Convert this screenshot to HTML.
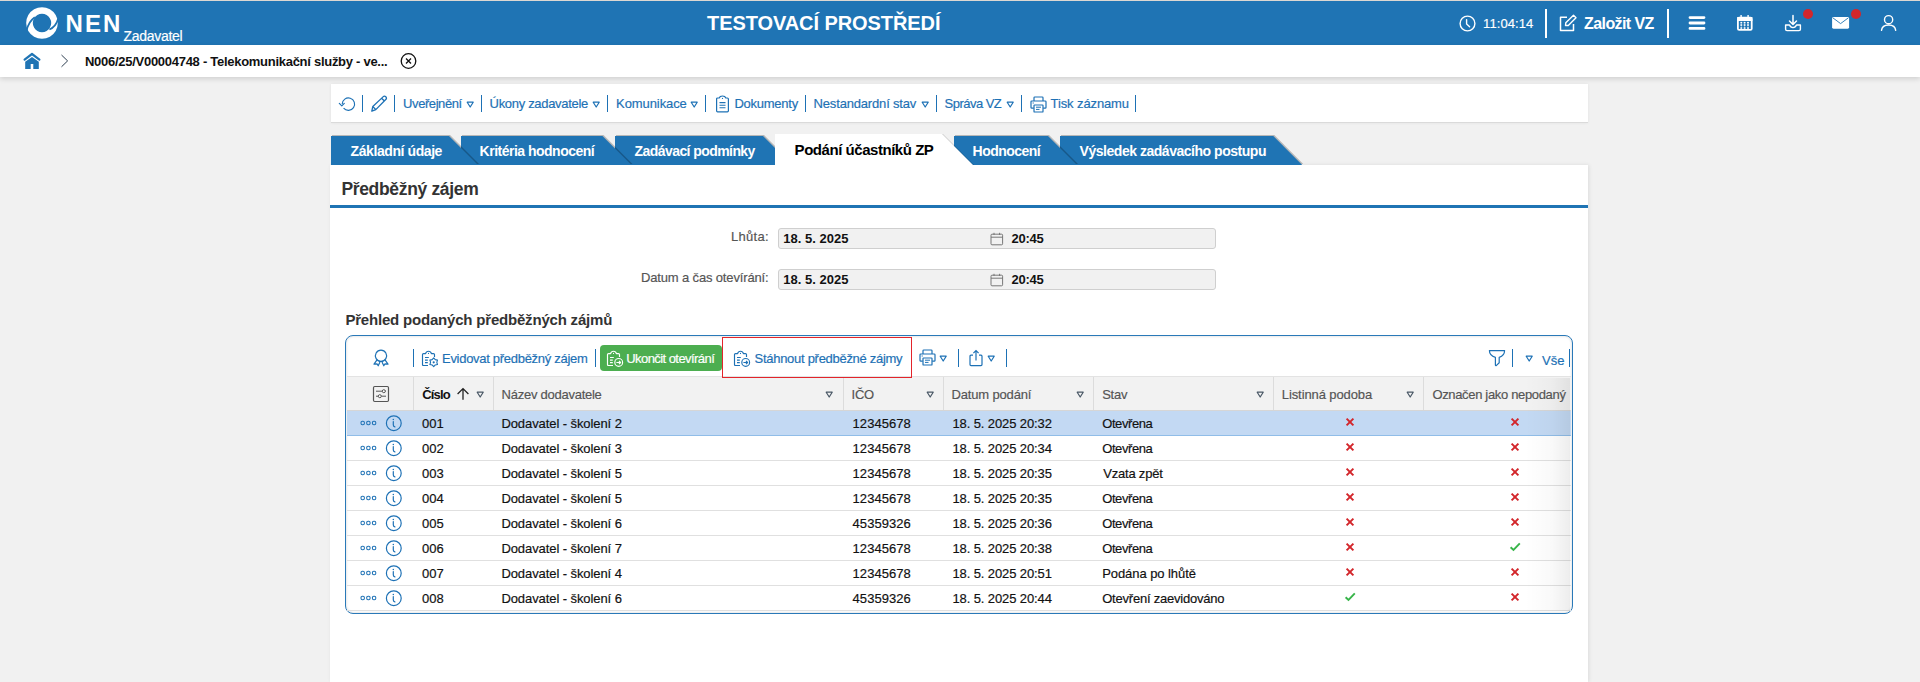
<!DOCTYPE html>
<html><head><meta charset="utf-8"><title>NEN</title>
<style>
*{box-sizing:border-box;margin:0;padding:0}
html,body{width:1920px;height:682px;overflow:hidden;background:#f1f1f1;font-family:"Liberation Sans",sans-serif;position:relative}
.a{position:absolute;display:block}
.t{position:absolute;white-space:pre;line-height:1}
</style></head><body>
<div class="a" style="left:0px;top:0px;width:1920px;height:1px;background:#dcd7d2"></div>
<div class="a" style="left:0px;top:1px;width:1920px;height:44px;background:#1f74b4"></div>
<div class="a" style="left:0px;top:45px;width:1920px;height:32px;background:#fff;box-shadow:0 2px 5px rgba(0,0,0,.14)"></div>
<svg class="a" style="left:25px;top:6px;" width="34" height="34" viewBox="0 0 34 34">
<defs><mask id="lm"><rect width="34" height="34" fill="#fff"/>
<path d="M1.6 24.5 Q3.6 15.5 9.8 11.2" fill="none" stroke="#000" stroke-width="1.7"/>
<path d="M33.2 12.6 Q31 20.6 24.4 23.6" fill="none" stroke="#000" stroke-width="1.7"/>
</mask></defs>
<g mask="url(#lm)"><path fill-rule="evenodd" fill="#fff" d="M17 1.2 A15.8 15.8 0 1 1 16.99 1.2 Z M17 7.8 A9.2 9.2 0 1 0 17.01 7.8 Z"/></g>
</svg>
<svg class="a" style="left:1459px;top:15px;" width="17" height="17" viewBox="0 0 17 17"><circle cx="8.5" cy="8.5" r="7.4" fill="none" stroke="#fff" stroke-width="1.4"/><path d="M7.6 4.6 L7.6 9 L10.6 11.8" fill="none" stroke="#fff" stroke-width="1.4" stroke-linecap="round"/></svg>
<div class="a" style="left:1545px;top:9px;width:2px;height:29px;background:#fff"></div>
<svg class="a" style="left:1559px;top:14px;" width="18" height="18" viewBox="0 0 18 18"><path d="M8 3.2 H1.5 V16.5 H14.5 V10" fill="none" stroke="#fff" stroke-width="1.5" stroke-linejoin="round"/><path d="M6.5 11.5 L6.8 8.8 L14.5 1.3 L17 3.8 L9.3 11.5 Z" fill="none" stroke="#fff" stroke-width="1.4" stroke-linejoin="round"/></svg>
<div class="a" style="left:1667px;top:9px;width:2px;height:29px;background:#fff"></div>
<svg class="a" style="left:1688px;top:15px;" width="18" height="16" viewBox="0 0 18 16"><path d="M2 2.6 H16 M2 8 H16 M2 13.4 H16" stroke="#fff" stroke-width="2.8" stroke-linecap="round"/></svg>
<svg class="a" style="left:1736px;top:14px;" width="18" height="18" viewBox="0 0 18 18"><rect x="1.9" y="3.7" width="13.8" height="12.2" rx="1.2" fill="none" stroke="#fff" stroke-width="1.8"/>
<rect x="1.2" y="3" width="15.2" height="4" fill="#fff"/>
<path d="M5.1 1 V4 M12.1 1 V4" stroke="#fff" stroke-width="1.4"/>
<g fill="#fff"><rect x="4.4" y="7.9" width="1.8" height="1.5"/><rect x="7.7" y="7.9" width="1.8" height="1.5"/><rect x="11.1" y="7.9" width="1.8" height="1.5"/>
<rect x="4.4" y="10.3" width="1.8" height="1.5"/><rect x="7.7" y="10.3" width="1.8" height="1.5"/><rect x="11.1" y="10.3" width="1.8" height="1.5"/>
<rect x="4.4" y="13.3" width="1.8" height="1.5"/><rect x="7.7" y="13.3" width="1.8" height="1.5"/><rect x="11.1" y="13.3" width="1.8" height="1.5"/>
<path d="M5.3 7.9 V14.8 M8.6 7.9 V14.8 M12 7.9 V14.8" stroke="#fff" stroke-width="0.6" opacity="0.6"/></g></svg>
<svg class="a" style="left:1784px;top:14px;" width="18" height="18" viewBox="0 0 18 18"><path d="M9 1.5 V10.5 M5.5 7 L9 10.5 L12.5 7" fill="none" stroke="#fff" stroke-width="1.5" stroke-linecap="round" stroke-linejoin="round"/><path d="M1.6 11 V15.2 Q1.6 16.6 3 16.6 H15 Q16.4 16.6 16.4 15.2 V11 H12.5 Q11.5 13.6 9 13.6 Q6.5 13.6 5.5 11 Z" fill="none" stroke="#fff" stroke-width="1.4" stroke-linejoin="round"/></svg>
<svg class="a" style="left:1802px;top:8px;" width="12" height="12" viewBox="0 0 12 12"><circle cx="6" cy="6" r="5" fill="#d3262b"/></svg>
<svg class="a" style="left:1831px;top:16px;" width="19" height="14" viewBox="0 0 19 14"><rect x="1.1" y="1.1" width="17" height="11.6" rx="1.4" fill="#fff"/><path d="M1.8 1.8 L9.6 7.6 L17.4 1.8" fill="none" stroke="#1f74b4" stroke-width="0.9"/></svg>
<svg class="a" style="left:1850px;top:8px;" width="12" height="12" viewBox="0 0 12 12"><circle cx="6" cy="6" r="5" fill="#d3262b"/></svg>
<svg class="a" style="left:1880px;top:14px;" width="17" height="18" viewBox="0 0 17 18"><circle cx="8.6" cy="5.7" r="4.1" fill="none" stroke="#fff" stroke-width="1.4"/><path d="M1.5 16.4 Q2 11 8.6 11 Q15.2 11 15.7 16.4" fill="none" stroke="#fff" stroke-width="1.4" stroke-linecap="round"/></svg>
<svg class="a" style="left:23px;top:52px;" width="18" height="18" viewBox="0 0 18 18"><path d="M1.6 7.6 L9 2 L16.4 7.6" fill="none" stroke="#1f74b4" stroke-width="2.2" stroke-linecap="round" stroke-linejoin="round"/><path d="M2.2 9.8 L9 5 L15.8 9.8 V17 H10.3 V12 H7.7 V17 H2.2 Z" fill="#1f74b4"/></svg>
<svg class="a" style="left:60px;top:54px;" width="10" height="14" viewBox="0 0 10 14"><path d="M1.5 1 L7.6 6.9 L1.5 12.8" fill="none" stroke="#2d3e50" stroke-width="1"/></svg>
<svg class="a" style="left:400px;top:53px;" width="17" height="17" viewBox="0 0 17 17"><circle cx="8.5" cy="8" r="7.3" fill="none" stroke="#111" stroke-width="1.3"/><path d="M6 5.5 L11 10.5 M11 5.5 L6 10.5" stroke="#111" stroke-width="1.3"/></svg>
<div class="a" style="left:331px;top:84px;width:1257px;height:39px;background:#fff;border-bottom:1px solid #dadada;box-shadow:0 0 3px rgba(0,0,0,.07)"></div>
<svg class="a" style="left:338px;top:95.8px;" width="19" height="18" viewBox="0 0 19 18"><path d="M4.2 8.05 A6.2 6.2 0 1 1 5.6 12.1" fill="none" stroke="#1d71b5" stroke-width="1.15"/><path d="M1.3 7.3 L3.8 9.8 L6.3 7.3" fill="none" stroke="#1d71b5" stroke-width="1.15" stroke-linejoin="round" stroke-linecap="round"/></svg>
<div class="a" style="left:362px;top:95px;width:1px;height:17px;background:#1d71b5"></div>
<svg class="a" style="left:370px;top:95px;" width="18" height="18" viewBox="0 0 18 18"><path d="M1.8 16.2 L2.8 11.5 L13.3 1.6 Q14.6 0.6 15.8 1.8 Q17 3 16 4.3 L5.8 14.6 Z M11.6 3.2 L14.4 6 M2.8 11.5 L5.8 14.6" fill="none" stroke="#1d71b5" stroke-width="1.3" stroke-linejoin="round"/></svg>
<div class="a" style="left:394px;top:95px;width:1px;height:17px;background:#1d71b5"></div>
<svg class="a" style="left:465.7px;top:100.5px;" width="9" height="8" viewBox="0 0 9 8"><path d="M1.2 1.2 H7.2 L4.2 6 Z" fill="none" stroke="#1d71b5" stroke-width="1.2" stroke-linejoin="round"/></svg>
<div class="a" style="left:481px;top:95px;width:1px;height:17px;background:#1d71b5"></div>
<svg class="a" style="left:592.0px;top:100.5px;" width="9" height="8" viewBox="0 0 9 8"><path d="M1.2 1.2 H7.2 L4.2 6 Z" fill="none" stroke="#1d71b5" stroke-width="1.2" stroke-linejoin="round"/></svg>
<div class="a" style="left:607px;top:95px;width:1px;height:17px;background:#1d71b5"></div>
<svg class="a" style="left:690.0px;top:100.5px;" width="9" height="8" viewBox="0 0 9 8"><path d="M1.2 1.2 H7.2 L4.2 6 Z" fill="none" stroke="#1d71b5" stroke-width="1.2" stroke-linejoin="round"/></svg>
<div class="a" style="left:705px;top:95px;width:1px;height:17px;background:#1d71b5"></div>
<svg class="a" style="left:715px;top:95px;" width="16" height="18" viewBox="0 0 16 18"><path d="M4.2 3 H2.6 Q1.6 3 1.6 4 V15.8 Q1.6 16.8 2.6 16.8 H12.4 Q13.4 16.8 13.4 15.8 V4 Q13.4 3 12.4 3 H10.8 Q10.2 1 7.5 1 Q4.8 1 4.2 3 Z" fill="none" stroke="#1d71b5" stroke-width="1.2" stroke-linejoin="round"/><path d="M4.5 7.6 H10.5 M4.5 10.2 H10.5 M4.5 12.8 H10.5" stroke="#1d71b5" stroke-width="1.1"/><circle cx="7.5" cy="3.4" r="0.6" fill="#1d71b5"/></svg>
<div class="a" style="left:805px;top:95px;width:1px;height:17px;background:#1d71b5"></div>
<svg class="a" style="left:920.7px;top:100.5px;" width="9" height="8" viewBox="0 0 9 8"><path d="M1.2 1.2 H7.2 L4.2 6 Z" fill="none" stroke="#1d71b5" stroke-width="1.2" stroke-linejoin="round"/></svg>
<div class="a" style="left:936px;top:95px;width:1px;height:17px;background:#1d71b5"></div>
<svg class="a" style="left:1005.7px;top:100.5px;" width="9" height="8" viewBox="0 0 9 8"><path d="M1.2 1.2 H7.2 L4.2 6 Z" fill="none" stroke="#1d71b5" stroke-width="1.2" stroke-linejoin="round"/></svg>
<div class="a" style="left:1021px;top:95px;width:1px;height:17px;background:#1d71b5"></div>
<svg class="a" style="left:1029.6px;top:95.6px;" width="17" height="17" viewBox="0 0 17 17"><path d="M4 5 V1.8 Q4 1 4.8 1 H12.2 Q13 1 13 1.8 V5" fill="none" stroke="#1d71b5" stroke-width="1.2"/><path d="M3.8 12.2 H1.8 Q1 12.2 1 11.4 V5.8 Q1 5 1.8 5 H15.2 Q16 5 16 5.8 V11.4 Q16 12.2 15.2 12.2 H13.2" fill="none" stroke="#1d71b5" stroke-width="1.2"/><rect x="4" y="9" width="9" height="7" rx="0.6" fill="none" stroke="#1d71b5" stroke-width="1.2"/><path d="M6 11.2 H11 M6 13.4 H9.5 M2.6 7 H3.8" stroke="#1d71b5" stroke-width="1"/></svg>
<div class="a" style="left:1135px;top:95px;width:1px;height:17px;background:#1d71b5"></div>
<div class="a" style="left:330px;top:165px;width:1258px;height:517px;background:#fff;box-shadow:1px 0 4px rgba(0,0,0,.09)"></div>
<div class="a" style="left:1060px;top:136px;width:244.29999999999995px;height:29px;filter:drop-shadow(1.5px -1px 0.7px rgba(0,0,0,.24))"><div style="width:242.29999999999995px;height:29px;background:#1f74b4;clip-path:polygon(0 0,213.29999999999995px 0,242.29999999999995px 100%,0 100%)"></div></div>
<div class="a" style="left:954px;top:136px;width:125px;height:29px;filter:drop-shadow(1.5px -1px 0.7px rgba(0,0,0,.24))"><div style="width:123px;height:29px;background:#1f74b4;clip-path:polygon(0 0,94px 0,123px 100%,0 100%)"></div></div>
<div class="a" style="left:615px;top:136px;width:179px;height:29px;filter:drop-shadow(1.5px -1px 0.7px rgba(0,0,0,.24))"><div style="width:177px;height:29px;background:#1f74b4;clip-path:polygon(0 0,148px 0,177px 100%,0 100%)"></div></div>
<div class="a" style="left:461px;top:136px;width:172.5px;height:29px;filter:drop-shadow(1.5px -1px 0.7px rgba(0,0,0,.24))"><div style="width:170.5px;height:29px;background:#1f74b4;clip-path:polygon(0 0,141.5px 0,170.5px 100%,0 100%)"></div></div>
<div class="a" style="left:331px;top:136px;width:149px;height:29px;filter:drop-shadow(1.5px -1px 0.7px rgba(0,0,0,.24))"><div style="width:147px;height:29px;background:#1f74b4;clip-path:polygon(0 0,118px 0,147px 100%,0 100%)"></div></div>
<div class="a" style="left:775px;top:134px;width:200px;height:31px;filter:drop-shadow(1.5px 0px 0.7px rgba(0,0,0,.16))"><div style="width:198px;height:31px;background:#fff;clip-path:polygon(0 0,167px 0,198px 100%,0 100%)"></div></div>
<div class="a" style="left:330px;top:205px;width:1258px;height:3px;background:#1f74b4"></div>
<div class="a" style="left:778px;top:228px;width:438px;height:21px;background:#f1f1f1;border:1px solid #cfcfcf;border-radius:3px"></div>
<svg class="a" style="left:990px;top:231.5px;" width="14" height="14" viewBox="0 0 14 14"><rect x="1" y="2.2" width="11.6" height="10.6" rx="1" fill="none" stroke="#777" stroke-width="1"/><path d="M1 5.2 H12.6 M4 0.8 V3 M9.6 0.8 V3" stroke="#777" stroke-width="1"/></svg>
<div class="a" style="left:778px;top:269px;width:438px;height:21px;background:#f1f1f1;border:1px solid #cfcfcf;border-radius:3px"></div>
<svg class="a" style="left:990px;top:272.5px;" width="14" height="14" viewBox="0 0 14 14"><rect x="1" y="2.2" width="11.6" height="10.6" rx="1" fill="none" stroke="#777" stroke-width="1"/><path d="M1 5.2 H12.6 M4 0.8 V3 M9.6 0.8 V3" stroke="#777" stroke-width="1"/></svg>
<div class="a" style="left:345px;top:335px;width:1228px;height:279px;border:1px solid #2a79b8;border-radius:8px;background:#fff;box-shadow:inset 0 0 2px 1px rgba(0,0,0,.09)"></div>
<div class="a" style="left:347px;top:376px;width:1224px;height:1px;background:#e3e3e3"></div>
<div class="a" style="left:347px;top:377px;width:1224px;height:33px;background:#f2f2f2"></div>
<div class="a" style="left:347px;top:410px;width:1224px;height:1px;background:#d6d6d6"></div>
<div class="a" style="left:413px;top:377px;width:1px;height:33px;background:#dcdcdc"></div>
<div class="a" style="left:493px;top:377px;width:1px;height:33px;background:#dcdcdc"></div>
<div class="a" style="left:843px;top:377px;width:1px;height:33px;background:#dcdcdc"></div>
<div class="a" style="left:943px;top:377px;width:1px;height:33px;background:#dcdcdc"></div>
<div class="a" style="left:1093px;top:377px;width:1px;height:33px;background:#dcdcdc"></div>
<div class="a" style="left:1273px;top:377px;width:1px;height:33px;background:#dcdcdc"></div>
<div class="a" style="left:1423px;top:377px;width:1px;height:33px;background:#dcdcdc"></div>
<svg class="a" style="left:372px;top:349px;" width="18" height="18" viewBox="0 0 18 18"><path d="M9 1.2 A5.6 5.6 0 1 1 8.99 1.2 Z" fill="none" stroke="#1d71b5" stroke-width="1.2"/><path d="M5 10.8 L2 15.2 L5 14.8 L6.2 16.8 L8 13 M13 10.8 L16 15.2 L13 14.8 L11.8 16.8 L10 13" fill="none" stroke="#1d71b5" stroke-width="1.2" stroke-linejoin="round"/></svg>
<div class="a" style="left:413px;top:349px;width:1px;height:18px;background:#1d71b5"></div>
<svg class="a" style="left:421px;top:350px;" width="18" height="18" viewBox="0 0 18 18"><path d="M7 15.5 H2.5 Q1.5 15.5 1.5 14.5 V4.6 Q1.5 3.6 2.5 3.6 H4.6 Q5.2 1.2 7.5 1.2 Q9.8 1.2 10.4 3.6 H12.5 Q13.5 3.6 13.5 4.6 V7" fill="none" stroke="#1d71b5" stroke-width="1.15" stroke-linejoin="round"/><circle cx="7.5" cy="3.4" r="0.55" fill="#1d71b5"/><path d="M4 7.5 H7.8 M4 10.1 H6.8 M4 12.6 H6.8" stroke="#1d71b5" stroke-width="1.2"/><path d="M12.70 7.90 L14.25 9.62 L16.51 10.10 L15.80 12.30 L16.51 14.50 L14.25 14.98 L12.70 16.70 L11.15 14.98 L8.89 14.50 L9.60 12.30 L8.89 10.10 L11.15 9.62 Z" fill="none" stroke="#1d71b5" stroke-width="1.1" stroke-linejoin="round"/><circle cx="12.7" cy="12.3" r="1.1" fill="#1d71b5"/></svg>
<div class="a" style="left:595px;top:349px;width:1px;height:18px;background:#1d71b5"></div>
<div class="a" style="left:600px;top:345px;width:121.5px;height:26px;background:#4cae50;border-radius:4px"></div>
<svg class="a" style="left:606px;top:350px;" width="18" height="18" viewBox="0 0 18 18"><path d="M7 15.5 H2.5 Q1.5 15.5 1.5 14.5 V4.6 Q1.5 3.6 2.5 3.6 H4.6 Q5.2 1.2 7.5 1.2 Q9.8 1.2 10.4 3.6 H12.5 Q13.5 3.6 13.5 4.6 V7" fill="none" stroke="#fff" stroke-width="1.15" stroke-linejoin="round"/><circle cx="7.5" cy="3.4" r="0.55" fill="#fff"/><path d="M4 7.5 H7.8 M4 10.1 H6.8 M4 12.6 H6.8" stroke="#fff" stroke-width="1.2"/><circle cx="12.7" cy="12.4" r="3.9" fill="none" stroke="#fff" stroke-width="1.15"/><path d="M10.4 12.5 H14.6 M13 10.9 L14.6 12.5 L13 14.1" fill="none" stroke="#fff" stroke-width="1.15" stroke-linejoin="round"/></svg>
<div class="a" style="left:722px;top:337px;width:190px;height:41px;border:1px solid #e3242b"></div>
<svg class="a" style="left:733px;top:350px;" width="18" height="18" viewBox="0 0 18 18"><path d="M7 15.5 H2.5 Q1.5 15.5 1.5 14.5 V4.6 Q1.5 3.6 2.5 3.6 H4.6 Q5.2 1.2 7.5 1.2 Q9.8 1.2 10.4 3.6 H12.5 Q13.5 3.6 13.5 4.6 V7" fill="none" stroke="#1d71b5" stroke-width="1.15" stroke-linejoin="round"/><circle cx="7.5" cy="3.4" r="0.55" fill="#1d71b5"/><path d="M4 7.5 H7.8 M4 10.1 H6.8 M4 12.6 H6.8" stroke="#1d71b5" stroke-width="1.2"/><circle cx="12.7" cy="12.4" r="3.9" fill="none" stroke="#1d71b5" stroke-width="1.15"/><path d="M10.4 12.5 H14.6 M13 10.9 L14.6 12.5 L13 14.1" fill="none" stroke="#1d71b5" stroke-width="1.15" stroke-linejoin="round"/></svg>
<div class="a" style="left:0;top:0;"></div>
<svg class="a" style="left:919.2px;top:349.3px;" width="17" height="17" viewBox="0 0 17 17"><path d="M4 5 V1.8 Q4 1 4.8 1 H12.2 Q13 1 13 1.8 V5" fill="none" stroke="#1d71b5" stroke-width="1.2"/><path d="M3.8 12.2 H1.8 Q1 12.2 1 11.4 V5.8 Q1 5 1.8 5 H15.2 Q16 5 16 5.8 V11.4 Q16 12.2 15.2 12.2 H13.2" fill="none" stroke="#1d71b5" stroke-width="1.2"/><rect x="4" y="9" width="9" height="7" rx="0.6" fill="none" stroke="#1d71b5" stroke-width="1.2"/><path d="M6 11.2 H11 M6 13.4 H9.5 M2.6 7 H3.8" stroke="#1d71b5" stroke-width="1"/></svg>
<svg class="a" style="left:938.8px;top:354.8px;" width="9" height="8" viewBox="0 0 9 8"><path d="M1.2 1.2 H7.2 L4.2 6 Z" fill="none" stroke="#1d71b5" stroke-width="1.2" stroke-linejoin="round"/></svg>
<div class="a" style="left:958px;top:349px;width:1px;height:18px;background:#1d71b5"></div>
<svg class="a" style="left:968px;top:349px;" width="16" height="18" viewBox="0 0 16 18"><path d="M5 6.2 H3 Q2 6.2 2 7.2 V15.6 Q2 16.6 3 16.6 H13 Q14 16.6 14 15.6 V7.2 Q14 6.2 13 6.2 H11" fill="none" stroke="#1d71b5" stroke-width="1.2"/><path d="M8 11.5 V1.6 M5.4 4.2 L8 1.6 L10.6 4.2" fill="none" stroke="#1d71b5" stroke-width="1.2"/></svg>
<svg class="a" style="left:986.8px;top:354.8px;" width="9" height="8" viewBox="0 0 9 8"><path d="M1.2 1.2 H7.2 L4.2 6 Z" fill="none" stroke="#1d71b5" stroke-width="1.2" stroke-linejoin="round"/></svg>
<div class="a" style="left:1006px;top:349px;width:1px;height:18px;background:#1d71b5"></div>
<svg class="a" style="left:1488px;top:349px;" width="18" height="18" viewBox="0 0 18 18"><path d="M1.4 1.6 H16.6 Q16.6 6.6 11.2 8.4 V13.8 L8.2 16.6 Q7.6 16.8 7.4 16 V8.4 Q1.4 6.6 1.4 1.6 Z" fill="none" stroke="#1d71b5" stroke-width="1.2" stroke-linejoin="round"/></svg>
<div class="a" style="left:1512px;top:349px;width:1px;height:18px;background:#1d71b5"></div>
<svg class="a" style="left:1524.6px;top:354.7px;" width="9" height="8" viewBox="0 0 9 8"><path d="M1.2 1.2 H7.2 L4.2 6 Z" fill="none" stroke="#1d71b5" stroke-width="1.2" stroke-linejoin="round"/></svg>
<div class="a" style="left:1569px;top:349px;width:1px;height:18px;background:#1d71b5"></div>
<svg class="a" style="left:372px;top:385px;" width="18" height="18" viewBox="0 0 18 18"><rect x="1.5" y="1.5" width="15" height="15" rx="1.2" fill="none" stroke="#555" stroke-width="1.2"/><path d="M4 6.2 H14 M4 11.2 H14" stroke="#555" stroke-width="1"/><circle cx="11.8" cy="6.2" r="1.5" fill="#fff" stroke="#555" stroke-width="1"/><circle cx="7.8" cy="11.2" r="1.5" fill="#fff" stroke="#555" stroke-width="1"/></svg>
<svg class="a" style="left:456px;top:387px;" width="14" height="14" viewBox="0 0 14 14"><path d="M7 12.8 V1.6 M1.6 7 L7 1.6 L12.4 7" fill="none" stroke="#222" stroke-width="1.3"/></svg>
<svg class="a" style="left:475.8px;top:390.5px;" width="9" height="8" viewBox="0 0 9 8"><path d="M1.2 1.2 H7.2 L4.2 6 Z" fill="none" stroke="#4a5866" stroke-width="1.2" stroke-linejoin="round"/></svg>
<svg class="a" style="left:825.2px;top:390.5px;" width="9" height="8" viewBox="0 0 9 8"><path d="M1.2 1.2 H7.2 L4.2 6 Z" fill="none" stroke="#4a5866" stroke-width="1.2" stroke-linejoin="round"/></svg>
<svg class="a" style="left:926.2px;top:390.5px;" width="9" height="8" viewBox="0 0 9 8"><path d="M1.2 1.2 H7.2 L4.2 6 Z" fill="none" stroke="#4a5866" stroke-width="1.2" stroke-linejoin="round"/></svg>
<svg class="a" style="left:1075.7px;top:390.5px;" width="9" height="8" viewBox="0 0 9 8"><path d="M1.2 1.2 H7.2 L4.2 6 Z" fill="none" stroke="#4a5866" stroke-width="1.2" stroke-linejoin="round"/></svg>
<svg class="a" style="left:1256.1px;top:390.5px;" width="9" height="8" viewBox="0 0 9 8"><path d="M1.2 1.2 H7.2 L4.2 6 Z" fill="none" stroke="#4a5866" stroke-width="1.2" stroke-linejoin="round"/></svg>
<svg class="a" style="left:1405.8px;top:390.5px;" width="9" height="8" viewBox="0 0 9 8"><path d="M1.2 1.2 H7.2 L4.2 6 Z" fill="none" stroke="#4a5866" stroke-width="1.2" stroke-linejoin="round"/></svg>
<div class="a" style="left:347px;top:411px;width:1224px;height:25px;background:#c3d9f3;border-bottom:1px solid #90bde8"></div>
<svg class="a" style="left:359.5px;top:419.2px;" width="18" height="8" viewBox="0 0 18 8"><rect x="1.0" y="2.3" width="3.4" height="3.4" rx="1.4" fill="none" stroke="#1d71b5" stroke-width="1.05"/><rect x="6.7" y="2.3" width="3.4" height="3.4" rx="1.4" fill="none" stroke="#1d71b5" stroke-width="1.05"/><rect x="12.4" y="2.3" width="3.4" height="3.4" rx="1.4" fill="none" stroke="#1d71b5" stroke-width="1.05"/></svg>
<svg class="a" style="left:385px;top:415.0px;" width="17" height="17" viewBox="0 0 17 17"><circle cx="8.8" cy="8.2" r="7.4" fill="none" stroke="#1d71b5" stroke-width="1.2"/><path d="M8.3 6.6 L8.3 10 Q8.4 11.6 9.9 11.8" fill="none" stroke="#1d71b5" stroke-width="1.2" stroke-linecap="round"/><circle cx="8.3" cy="4.5" r="0.75" fill="#1d71b5"/></svg>
<svg class="a" style="left:1344.7px;top:417.2px;" width="10" height="10" viewBox="0 0 10 10"><path d="M1.6 1.6 L8.4 8.4 M8.4 1.6 L1.6 8.4" stroke="#d3262b" stroke-width="2"/></svg>
<svg class="a" style="left:1509.7px;top:417.2px;" width="10" height="10" viewBox="0 0 10 10"><path d="M1.6 1.6 L8.4 8.4 M8.4 1.6 L1.6 8.4" stroke="#d3262b" stroke-width="2"/></svg>
<div class="a" style="left:347px;top:460px;width:1224px;height:1px;background:#e0e0e0"></div>
<svg class="a" style="left:359.5px;top:444.2px;" width="18" height="8" viewBox="0 0 18 8"><rect x="1.0" y="2.3" width="3.4" height="3.4" rx="1.4" fill="none" stroke="#1d71b5" stroke-width="1.05"/><rect x="6.7" y="2.3" width="3.4" height="3.4" rx="1.4" fill="none" stroke="#1d71b5" stroke-width="1.05"/><rect x="12.4" y="2.3" width="3.4" height="3.4" rx="1.4" fill="none" stroke="#1d71b5" stroke-width="1.05"/></svg>
<svg class="a" style="left:385px;top:440.0px;" width="17" height="17" viewBox="0 0 17 17"><circle cx="8.8" cy="8.2" r="7.4" fill="none" stroke="#1d71b5" stroke-width="1.2"/><path d="M8.3 6.6 L8.3 10 Q8.4 11.6 9.9 11.8" fill="none" stroke="#1d71b5" stroke-width="1.2" stroke-linecap="round"/><circle cx="8.3" cy="4.5" r="0.75" fill="#1d71b5"/></svg>
<svg class="a" style="left:1344.7px;top:442.2px;" width="10" height="10" viewBox="0 0 10 10"><path d="M1.6 1.6 L8.4 8.4 M8.4 1.6 L1.6 8.4" stroke="#d3262b" stroke-width="2"/></svg>
<svg class="a" style="left:1509.7px;top:442.2px;" width="10" height="10" viewBox="0 0 10 10"><path d="M1.6 1.6 L8.4 8.4 M8.4 1.6 L1.6 8.4" stroke="#d3262b" stroke-width="2"/></svg>
<div class="a" style="left:347px;top:485px;width:1224px;height:1px;background:#e0e0e0"></div>
<svg class="a" style="left:359.5px;top:469.2px;" width="18" height="8" viewBox="0 0 18 8"><rect x="1.0" y="2.3" width="3.4" height="3.4" rx="1.4" fill="none" stroke="#1d71b5" stroke-width="1.05"/><rect x="6.7" y="2.3" width="3.4" height="3.4" rx="1.4" fill="none" stroke="#1d71b5" stroke-width="1.05"/><rect x="12.4" y="2.3" width="3.4" height="3.4" rx="1.4" fill="none" stroke="#1d71b5" stroke-width="1.05"/></svg>
<svg class="a" style="left:385px;top:465.0px;" width="17" height="17" viewBox="0 0 17 17"><circle cx="8.8" cy="8.2" r="7.4" fill="none" stroke="#1d71b5" stroke-width="1.2"/><path d="M8.3 6.6 L8.3 10 Q8.4 11.6 9.9 11.8" fill="none" stroke="#1d71b5" stroke-width="1.2" stroke-linecap="round"/><circle cx="8.3" cy="4.5" r="0.75" fill="#1d71b5"/></svg>
<svg class="a" style="left:1344.7px;top:467.2px;" width="10" height="10" viewBox="0 0 10 10"><path d="M1.6 1.6 L8.4 8.4 M8.4 1.6 L1.6 8.4" stroke="#d3262b" stroke-width="2"/></svg>
<svg class="a" style="left:1509.7px;top:467.2px;" width="10" height="10" viewBox="0 0 10 10"><path d="M1.6 1.6 L8.4 8.4 M8.4 1.6 L1.6 8.4" stroke="#d3262b" stroke-width="2"/></svg>
<div class="a" style="left:347px;top:510px;width:1224px;height:1px;background:#e0e0e0"></div>
<svg class="a" style="left:359.5px;top:494.2px;" width="18" height="8" viewBox="0 0 18 8"><rect x="1.0" y="2.3" width="3.4" height="3.4" rx="1.4" fill="none" stroke="#1d71b5" stroke-width="1.05"/><rect x="6.7" y="2.3" width="3.4" height="3.4" rx="1.4" fill="none" stroke="#1d71b5" stroke-width="1.05"/><rect x="12.4" y="2.3" width="3.4" height="3.4" rx="1.4" fill="none" stroke="#1d71b5" stroke-width="1.05"/></svg>
<svg class="a" style="left:385px;top:490.0px;" width="17" height="17" viewBox="0 0 17 17"><circle cx="8.8" cy="8.2" r="7.4" fill="none" stroke="#1d71b5" stroke-width="1.2"/><path d="M8.3 6.6 L8.3 10 Q8.4 11.6 9.9 11.8" fill="none" stroke="#1d71b5" stroke-width="1.2" stroke-linecap="round"/><circle cx="8.3" cy="4.5" r="0.75" fill="#1d71b5"/></svg>
<svg class="a" style="left:1344.7px;top:492.2px;" width="10" height="10" viewBox="0 0 10 10"><path d="M1.6 1.6 L8.4 8.4 M8.4 1.6 L1.6 8.4" stroke="#d3262b" stroke-width="2"/></svg>
<svg class="a" style="left:1509.7px;top:492.2px;" width="10" height="10" viewBox="0 0 10 10"><path d="M1.6 1.6 L8.4 8.4 M8.4 1.6 L1.6 8.4" stroke="#d3262b" stroke-width="2"/></svg>
<div class="a" style="left:347px;top:535px;width:1224px;height:1px;background:#e0e0e0"></div>
<svg class="a" style="left:359.5px;top:519.2px;" width="18" height="8" viewBox="0 0 18 8"><rect x="1.0" y="2.3" width="3.4" height="3.4" rx="1.4" fill="none" stroke="#1d71b5" stroke-width="1.05"/><rect x="6.7" y="2.3" width="3.4" height="3.4" rx="1.4" fill="none" stroke="#1d71b5" stroke-width="1.05"/><rect x="12.4" y="2.3" width="3.4" height="3.4" rx="1.4" fill="none" stroke="#1d71b5" stroke-width="1.05"/></svg>
<svg class="a" style="left:385px;top:515.0px;" width="17" height="17" viewBox="0 0 17 17"><circle cx="8.8" cy="8.2" r="7.4" fill="none" stroke="#1d71b5" stroke-width="1.2"/><path d="M8.3 6.6 L8.3 10 Q8.4 11.6 9.9 11.8" fill="none" stroke="#1d71b5" stroke-width="1.2" stroke-linecap="round"/><circle cx="8.3" cy="4.5" r="0.75" fill="#1d71b5"/></svg>
<svg class="a" style="left:1344.7px;top:517.2px;" width="10" height="10" viewBox="0 0 10 10"><path d="M1.6 1.6 L8.4 8.4 M8.4 1.6 L1.6 8.4" stroke="#d3262b" stroke-width="2"/></svg>
<svg class="a" style="left:1509.7px;top:517.2px;" width="10" height="10" viewBox="0 0 10 10"><path d="M1.6 1.6 L8.4 8.4 M8.4 1.6 L1.6 8.4" stroke="#d3262b" stroke-width="2"/></svg>
<div class="a" style="left:347px;top:560px;width:1224px;height:1px;background:#e0e0e0"></div>
<svg class="a" style="left:359.5px;top:544.2px;" width="18" height="8" viewBox="0 0 18 8"><rect x="1.0" y="2.3" width="3.4" height="3.4" rx="1.4" fill="none" stroke="#1d71b5" stroke-width="1.05"/><rect x="6.7" y="2.3" width="3.4" height="3.4" rx="1.4" fill="none" stroke="#1d71b5" stroke-width="1.05"/><rect x="12.4" y="2.3" width="3.4" height="3.4" rx="1.4" fill="none" stroke="#1d71b5" stroke-width="1.05"/></svg>
<svg class="a" style="left:385px;top:540.0px;" width="17" height="17" viewBox="0 0 17 17"><circle cx="8.8" cy="8.2" r="7.4" fill="none" stroke="#1d71b5" stroke-width="1.2"/><path d="M8.3 6.6 L8.3 10 Q8.4 11.6 9.9 11.8" fill="none" stroke="#1d71b5" stroke-width="1.2" stroke-linecap="round"/><circle cx="8.3" cy="4.5" r="0.75" fill="#1d71b5"/></svg>
<svg class="a" style="left:1344.7px;top:542.2px;" width="10" height="10" viewBox="0 0 10 10"><path d="M1.6 1.6 L8.4 8.4 M8.4 1.6 L1.6 8.4" stroke="#d3262b" stroke-width="2"/></svg>
<svg class="a" style="left:1508.7px;top:542.2px;" width="12" height="10" viewBox="0 0 12 10"><path d="M1.6 5.2 L4.5 8 L10.8 1.4" fill="none" stroke="#38b54a" stroke-width="1.9"/></svg>
<div class="a" style="left:347px;top:585px;width:1224px;height:1px;background:#e0e0e0"></div>
<svg class="a" style="left:359.5px;top:569.2px;" width="18" height="8" viewBox="0 0 18 8"><rect x="1.0" y="2.3" width="3.4" height="3.4" rx="1.4" fill="none" stroke="#1d71b5" stroke-width="1.05"/><rect x="6.7" y="2.3" width="3.4" height="3.4" rx="1.4" fill="none" stroke="#1d71b5" stroke-width="1.05"/><rect x="12.4" y="2.3" width="3.4" height="3.4" rx="1.4" fill="none" stroke="#1d71b5" stroke-width="1.05"/></svg>
<svg class="a" style="left:385px;top:565.0px;" width="17" height="17" viewBox="0 0 17 17"><circle cx="8.8" cy="8.2" r="7.4" fill="none" stroke="#1d71b5" stroke-width="1.2"/><path d="M8.3 6.6 L8.3 10 Q8.4 11.6 9.9 11.8" fill="none" stroke="#1d71b5" stroke-width="1.2" stroke-linecap="round"/><circle cx="8.3" cy="4.5" r="0.75" fill="#1d71b5"/></svg>
<svg class="a" style="left:1344.7px;top:567.2px;" width="10" height="10" viewBox="0 0 10 10"><path d="M1.6 1.6 L8.4 8.4 M8.4 1.6 L1.6 8.4" stroke="#d3262b" stroke-width="2"/></svg>
<svg class="a" style="left:1509.7px;top:567.2px;" width="10" height="10" viewBox="0 0 10 10"><path d="M1.6 1.6 L8.4 8.4 M8.4 1.6 L1.6 8.4" stroke="#d3262b" stroke-width="2"/></svg>
<div class="a" style="left:347px;top:610px;width:1224px;height:1px;background:#e0e0e0"></div>
<svg class="a" style="left:359.5px;top:594.2px;" width="18" height="8" viewBox="0 0 18 8"><rect x="1.0" y="2.3" width="3.4" height="3.4" rx="1.4" fill="none" stroke="#1d71b5" stroke-width="1.05"/><rect x="6.7" y="2.3" width="3.4" height="3.4" rx="1.4" fill="none" stroke="#1d71b5" stroke-width="1.05"/><rect x="12.4" y="2.3" width="3.4" height="3.4" rx="1.4" fill="none" stroke="#1d71b5" stroke-width="1.05"/></svg>
<svg class="a" style="left:385px;top:590.0px;" width="17" height="17" viewBox="0 0 17 17"><circle cx="8.8" cy="8.2" r="7.4" fill="none" stroke="#1d71b5" stroke-width="1.2"/><path d="M8.3 6.6 L8.3 10 Q8.4 11.6 9.9 11.8" fill="none" stroke="#1d71b5" stroke-width="1.2" stroke-linecap="round"/><circle cx="8.3" cy="4.5" r="0.75" fill="#1d71b5"/></svg>
<svg class="a" style="left:1343.7px;top:592.2px;" width="12" height="10" viewBox="0 0 12 10"><path d="M1.6 5.2 L4.5 8 L10.8 1.4" fill="none" stroke="#38b54a" stroke-width="1.9"/></svg>
<svg class="a" style="left:1509.7px;top:592.2px;" width="10" height="10" viewBox="0 0 10 10"><path d="M1.6 1.6 L8.4 8.4 M8.4 1.6 L1.6 8.4" stroke="#d3262b" stroke-width="2"/></svg>
<div class="a" style="left:1525px;top:377.5px;width:45px;height:233px;background:linear-gradient(to right,rgba(0,0,0,0),rgba(0,0,0,.025) 60%,rgba(0,0,0,.07))"></div>
<div class="t" style="left:65.60px;top:12.30px;font-size:24px;font-weight:bold;color:#fff;letter-spacing:2.030px;">NEN</div>
<div class="t" style="left:123.60px;top:28.80px;font-size:14px;font-weight:normal;color:#fff;letter-spacing:-0.297px;-webkit-text-stroke:0.18px currentColor;">Zadavatel</div>
<div class="t" style="left:707.00px;top:13.20px;font-size:20px;font-weight:bold;color:#fff;letter-spacing:-0.072px;">TESTOVACÍ PROSTŘEDÍ</div>
<div class="t" style="left:1483.10px;top:17.25px;font-size:13px;font-weight:normal;color:#fff;letter-spacing:0.070px;-webkit-text-stroke:0.18px currentColor;">11:04:14</div>
<div class="t" style="left:1584.10px;top:16.25px;font-size:16px;font-weight:bold;color:#fff;letter-spacing:-0.598px;">Založit VZ</div>
<div class="t" style="left:85.00px;top:54.90px;font-size:13px;font-weight:bold;color:#111;letter-spacing:-0.278px;">N006/25/V00004748 - Telekomunikační služby - ve...</div>
<div class="t" style="left:403.10px;top:97.20px;font-size:13px;font-weight:normal;color:#1d71b5;letter-spacing:-0.428px;-webkit-text-stroke:0.18px currentColor;">Uveřejnění</div>
<div class="t" style="left:489.60px;top:97.20px;font-size:13px;font-weight:normal;color:#1d71b5;letter-spacing:-0.314px;-webkit-text-stroke:0.18px currentColor;">Úkony zadavatele</div>
<div class="t" style="left:616.10px;top:97.20px;font-size:13px;font-weight:normal;color:#1d71b5;letter-spacing:-0.090px;-webkit-text-stroke:0.18px currentColor;">Komunikace</div>
<div class="t" style="left:734.40px;top:97.20px;font-size:13px;font-weight:normal;color:#1d71b5;letter-spacing:-0.244px;-webkit-text-stroke:0.18px currentColor;">Dokumenty</div>
<div class="t" style="left:813.60px;top:97.20px;font-size:13px;font-weight:normal;color:#1d71b5;letter-spacing:-0.172px;-webkit-text-stroke:0.18px currentColor;">Nestandardní stav</div>
<div class="t" style="left:944.60px;top:97.20px;font-size:13px;font-weight:normal;color:#1d71b5;letter-spacing:-0.528px;-webkit-text-stroke:0.18px currentColor;">Správa VZ</div>
<div class="t" style="left:1050.60px;top:97.20px;font-size:13px;font-weight:normal;color:#1d71b5;letter-spacing:-0.112px;-webkit-text-stroke:0.18px currentColor;">Tisk záznamu</div>
<div class="t" style="left:350.60px;top:144.00px;font-size:14px;font-weight:bold;color:#fff;letter-spacing:-0.420px;">Základní údaje</div>
<div class="t" style="left:479.60px;top:144.00px;font-size:14px;font-weight:bold;color:#fff;letter-spacing:-0.503px;">Kritéria hodnocení</div>
<div class="t" style="left:634.60px;top:144.00px;font-size:14px;font-weight:bold;color:#fff;letter-spacing:-0.572px;">Zadávací podmínky</div>
<div class="t" style="left:794.60px;top:142.00px;font-size:15px;font-weight:bold;color:#000;letter-spacing:-0.459px;">Podání účastníků ZP</div>
<div class="t" style="left:972.60px;top:144.00px;font-size:14px;font-weight:bold;color:#fff;letter-spacing:-0.524px;">Hodnocení</div>
<div class="t" style="left:1079.60px;top:144.00px;font-size:14px;font-weight:bold;color:#fff;letter-spacing:-0.474px;">Výsledek zadávacího postupu</div>
<div class="t" style="left:341.40px;top:181.00px;font-size:17.5px;font-weight:bold;color:#333;letter-spacing:-0.331px;">Předběžný zájem</div>
<div class="t" style="left:731.00px;top:230.10px;font-size:13px;font-weight:normal;color:#555;letter-spacing:0.294px;-webkit-text-stroke:0.18px currentColor;">Lhůta:</div>
<div class="t" style="left:641.00px;top:271.10px;font-size:13px;font-weight:normal;color:#555;letter-spacing:-0.151px;-webkit-text-stroke:0.18px currentColor;">Datum a čas otevírání:</div>
<div class="t" style="left:783.20px;top:232.30px;font-size:13px;font-weight:bold;color:#111;letter-spacing:0.017px;">18. 5. 2025</div>
<div class="t" style="left:1011.60px;top:232.30px;font-size:13px;font-weight:bold;color:#111;letter-spacing:-0.280px;">20:45</div>
<div class="t" style="left:783.20px;top:273.30px;font-size:13px;font-weight:bold;color:#111;letter-spacing:0.017px;">18. 5. 2025</div>
<div class="t" style="left:1011.60px;top:273.30px;font-size:13px;font-weight:bold;color:#111;letter-spacing:-0.280px;">20:45</div>
<div class="t" style="left:345.40px;top:312.20px;font-size:15px;font-weight:bold;color:#333;letter-spacing:-0.195px;">Přehled podaných předběžných zájmů</div>
<div class="t" style="left:442.00px;top:352.00px;font-size:13px;font-weight:normal;color:#1d71b5;letter-spacing:-0.289px;-webkit-text-stroke:0.18px currentColor;">Evidovat předběžný zájem</div>
<div class="t" style="left:626.20px;top:352.00px;font-size:13px;font-weight:normal;color:#fff;letter-spacing:-0.558px;-webkit-text-stroke:0.18px currentColor;">Ukončit otevírání</div>
<div class="t" style="left:754.60px;top:352.00px;font-size:13px;font-weight:normal;color:#1d71b5;letter-spacing:-0.289px;-webkit-text-stroke:0.18px currentColor;">Stáhnout předběžné zájmy</div>
<div class="t" style="left:1542.00px;top:353.80px;font-size:13px;font-weight:normal;color:#1d71b5;letter-spacing:0.000px;-webkit-text-stroke:0.18px currentColor;">Vše</div>
<div class="t" style="left:422.20px;top:387.60px;font-size:13px;font-weight:bold;color:#111;letter-spacing:-0.810px;">Číslo</div>
<div class="t" style="left:501.60px;top:387.60px;font-size:13px;font-weight:normal;color:#555;letter-spacing:-0.256px;-webkit-text-stroke:0.18px currentColor;">Název dodavatele</div>
<div class="t" style="left:851.60px;top:387.60px;font-size:13px;font-weight:normal;color:#555;letter-spacing:-0.300px;-webkit-text-stroke:0.18px currentColor;">IČO</div>
<div class="t" style="left:951.40px;top:387.60px;font-size:13px;font-weight:normal;color:#555;letter-spacing:-0.150px;-webkit-text-stroke:0.18px currentColor;">Datum podání</div>
<div class="t" style="left:1102.20px;top:387.60px;font-size:13px;font-weight:normal;color:#555;letter-spacing:-0.250px;-webkit-text-stroke:0.18px currentColor;">Stav</div>
<div class="t" style="left:1281.80px;top:387.60px;font-size:13px;font-weight:normal;color:#555;letter-spacing:-0.098px;-webkit-text-stroke:0.18px currentColor;">Listinná podoba</div>
<div class="t" style="left:1432.40px;top:387.60px;font-size:13px;font-weight:normal;color:#555;letter-spacing:-0.336px;-webkit-text-stroke:0.18px currentColor;">Označen jako nepodaný</div>
<div class="t" style="left:422.00px;top:417.10px;font-size:13px;font-weight:normal;color:#111;letter-spacing:0.070px;-webkit-text-stroke:0.18px currentColor;">001</div>
<div class="t" style="left:501.40px;top:417.10px;font-size:13px;font-weight:normal;color:#111;letter-spacing:-0.080px;-webkit-text-stroke:0.18px currentColor;">Dodavatel - školení 2</div>
<div class="t" style="left:852.60px;top:417.10px;font-size:13px;font-weight:normal;color:#111;letter-spacing:0.050px;-webkit-text-stroke:0.18px currentColor;">12345678</div>
<div class="t" style="left:952.40px;top:417.10px;font-size:13px;font-weight:normal;color:#111;letter-spacing:-0.104px;-webkit-text-stroke:0.18px currentColor;">18. 5. 2025 20:32</div>
<div class="t" style="left:1102.20px;top:417.10px;font-size:13px;font-weight:normal;color:#111;letter-spacing:-0.406px;-webkit-text-stroke:0.18px currentColor;">Otevřena</div>
<div class="t" style="left:422.00px;top:442.10px;font-size:13px;font-weight:normal;color:#111;letter-spacing:0.070px;-webkit-text-stroke:0.18px currentColor;">002</div>
<div class="t" style="left:501.40px;top:442.10px;font-size:13px;font-weight:normal;color:#111;letter-spacing:-0.080px;-webkit-text-stroke:0.18px currentColor;">Dodavatel - školení 3</div>
<div class="t" style="left:852.60px;top:442.10px;font-size:13px;font-weight:normal;color:#111;letter-spacing:0.050px;-webkit-text-stroke:0.18px currentColor;">12345678</div>
<div class="t" style="left:952.40px;top:442.10px;font-size:13px;font-weight:normal;color:#111;letter-spacing:-0.104px;-webkit-text-stroke:0.18px currentColor;">18. 5. 2025 20:34</div>
<div class="t" style="left:1102.20px;top:442.10px;font-size:13px;font-weight:normal;color:#111;letter-spacing:-0.406px;-webkit-text-stroke:0.18px currentColor;">Otevřena</div>
<div class="t" style="left:422.00px;top:467.10px;font-size:13px;font-weight:normal;color:#111;letter-spacing:0.070px;-webkit-text-stroke:0.18px currentColor;">003</div>
<div class="t" style="left:501.40px;top:467.10px;font-size:13px;font-weight:normal;color:#111;letter-spacing:-0.080px;-webkit-text-stroke:0.18px currentColor;">Dodavatel - školení 5</div>
<div class="t" style="left:852.60px;top:467.10px;font-size:13px;font-weight:normal;color:#111;letter-spacing:0.050px;-webkit-text-stroke:0.18px currentColor;">12345678</div>
<div class="t" style="left:952.40px;top:467.10px;font-size:13px;font-weight:normal;color:#111;letter-spacing:-0.104px;-webkit-text-stroke:0.18px currentColor;">18. 5. 2025 20:35</div>
<div class="t" style="left:1103.20px;top:467.10px;font-size:13px;font-weight:normal;color:#111;letter-spacing:-0.202px;-webkit-text-stroke:0.18px currentColor;">Vzata zpět</div>
<div class="t" style="left:422.00px;top:492.10px;font-size:13px;font-weight:normal;color:#111;letter-spacing:0.070px;-webkit-text-stroke:0.18px currentColor;">004</div>
<div class="t" style="left:501.40px;top:492.10px;font-size:13px;font-weight:normal;color:#111;letter-spacing:-0.080px;-webkit-text-stroke:0.18px currentColor;">Dodavatel - školení 5</div>
<div class="t" style="left:852.60px;top:492.10px;font-size:13px;font-weight:normal;color:#111;letter-spacing:0.050px;-webkit-text-stroke:0.18px currentColor;">12345678</div>
<div class="t" style="left:952.40px;top:492.10px;font-size:13px;font-weight:normal;color:#111;letter-spacing:-0.104px;-webkit-text-stroke:0.18px currentColor;">18. 5. 2025 20:35</div>
<div class="t" style="left:1102.20px;top:492.10px;font-size:13px;font-weight:normal;color:#111;letter-spacing:-0.406px;-webkit-text-stroke:0.18px currentColor;">Otevřena</div>
<div class="t" style="left:422.00px;top:517.10px;font-size:13px;font-weight:normal;color:#111;letter-spacing:0.070px;-webkit-text-stroke:0.18px currentColor;">005</div>
<div class="t" style="left:501.40px;top:517.10px;font-size:13px;font-weight:normal;color:#111;letter-spacing:-0.080px;-webkit-text-stroke:0.18px currentColor;">Dodavatel - školení 6</div>
<div class="t" style="left:852.60px;top:517.10px;font-size:13px;font-weight:normal;color:#111;letter-spacing:0.050px;-webkit-text-stroke:0.18px currentColor;">45359326</div>
<div class="t" style="left:952.40px;top:517.10px;font-size:13px;font-weight:normal;color:#111;letter-spacing:-0.104px;-webkit-text-stroke:0.18px currentColor;">18. 5. 2025 20:36</div>
<div class="t" style="left:1102.20px;top:517.10px;font-size:13px;font-weight:normal;color:#111;letter-spacing:-0.406px;-webkit-text-stroke:0.18px currentColor;">Otevřena</div>
<div class="t" style="left:422.00px;top:542.10px;font-size:13px;font-weight:normal;color:#111;letter-spacing:0.070px;-webkit-text-stroke:0.18px currentColor;">006</div>
<div class="t" style="left:501.40px;top:542.10px;font-size:13px;font-weight:normal;color:#111;letter-spacing:-0.080px;-webkit-text-stroke:0.18px currentColor;">Dodavatel - školení 7</div>
<div class="t" style="left:852.60px;top:542.10px;font-size:13px;font-weight:normal;color:#111;letter-spacing:0.050px;-webkit-text-stroke:0.18px currentColor;">12345678</div>
<div class="t" style="left:952.40px;top:542.10px;font-size:13px;font-weight:normal;color:#111;letter-spacing:-0.104px;-webkit-text-stroke:0.18px currentColor;">18. 5. 2025 20:38</div>
<div class="t" style="left:1102.20px;top:542.10px;font-size:13px;font-weight:normal;color:#111;letter-spacing:-0.406px;-webkit-text-stroke:0.18px currentColor;">Otevřena</div>
<div class="t" style="left:422.00px;top:567.10px;font-size:13px;font-weight:normal;color:#111;letter-spacing:0.070px;-webkit-text-stroke:0.18px currentColor;">007</div>
<div class="t" style="left:501.40px;top:567.10px;font-size:13px;font-weight:normal;color:#111;letter-spacing:-0.080px;-webkit-text-stroke:0.18px currentColor;">Dodavatel - školení 4</div>
<div class="t" style="left:852.60px;top:567.10px;font-size:13px;font-weight:normal;color:#111;letter-spacing:0.050px;-webkit-text-stroke:0.18px currentColor;">12345678</div>
<div class="t" style="left:952.40px;top:567.10px;font-size:13px;font-weight:normal;color:#111;letter-spacing:-0.104px;-webkit-text-stroke:0.18px currentColor;">18. 5. 2025 20:51</div>
<div class="t" style="left:1102.20px;top:567.10px;font-size:13px;font-weight:normal;color:#111;letter-spacing:-0.069px;-webkit-text-stroke:0.18px currentColor;">Podána po lhůtě</div>
<div class="t" style="left:422.00px;top:592.10px;font-size:13px;font-weight:normal;color:#111;letter-spacing:0.070px;-webkit-text-stroke:0.18px currentColor;">008</div>
<div class="t" style="left:501.40px;top:592.10px;font-size:13px;font-weight:normal;color:#111;letter-spacing:-0.080px;-webkit-text-stroke:0.18px currentColor;">Dodavatel - školení 6</div>
<div class="t" style="left:852.60px;top:592.10px;font-size:13px;font-weight:normal;color:#111;letter-spacing:0.050px;-webkit-text-stroke:0.18px currentColor;">45359326</div>
<div class="t" style="left:952.40px;top:592.10px;font-size:13px;font-weight:normal;color:#111;letter-spacing:-0.104px;-webkit-text-stroke:0.18px currentColor;">18. 5. 2025 20:44</div>
<div class="t" style="left:1102.20px;top:592.10px;font-size:13px;font-weight:normal;color:#111;letter-spacing:-0.218px;-webkit-text-stroke:0.18px currentColor;">Otevření zaevidováno</div>
</body></html>
